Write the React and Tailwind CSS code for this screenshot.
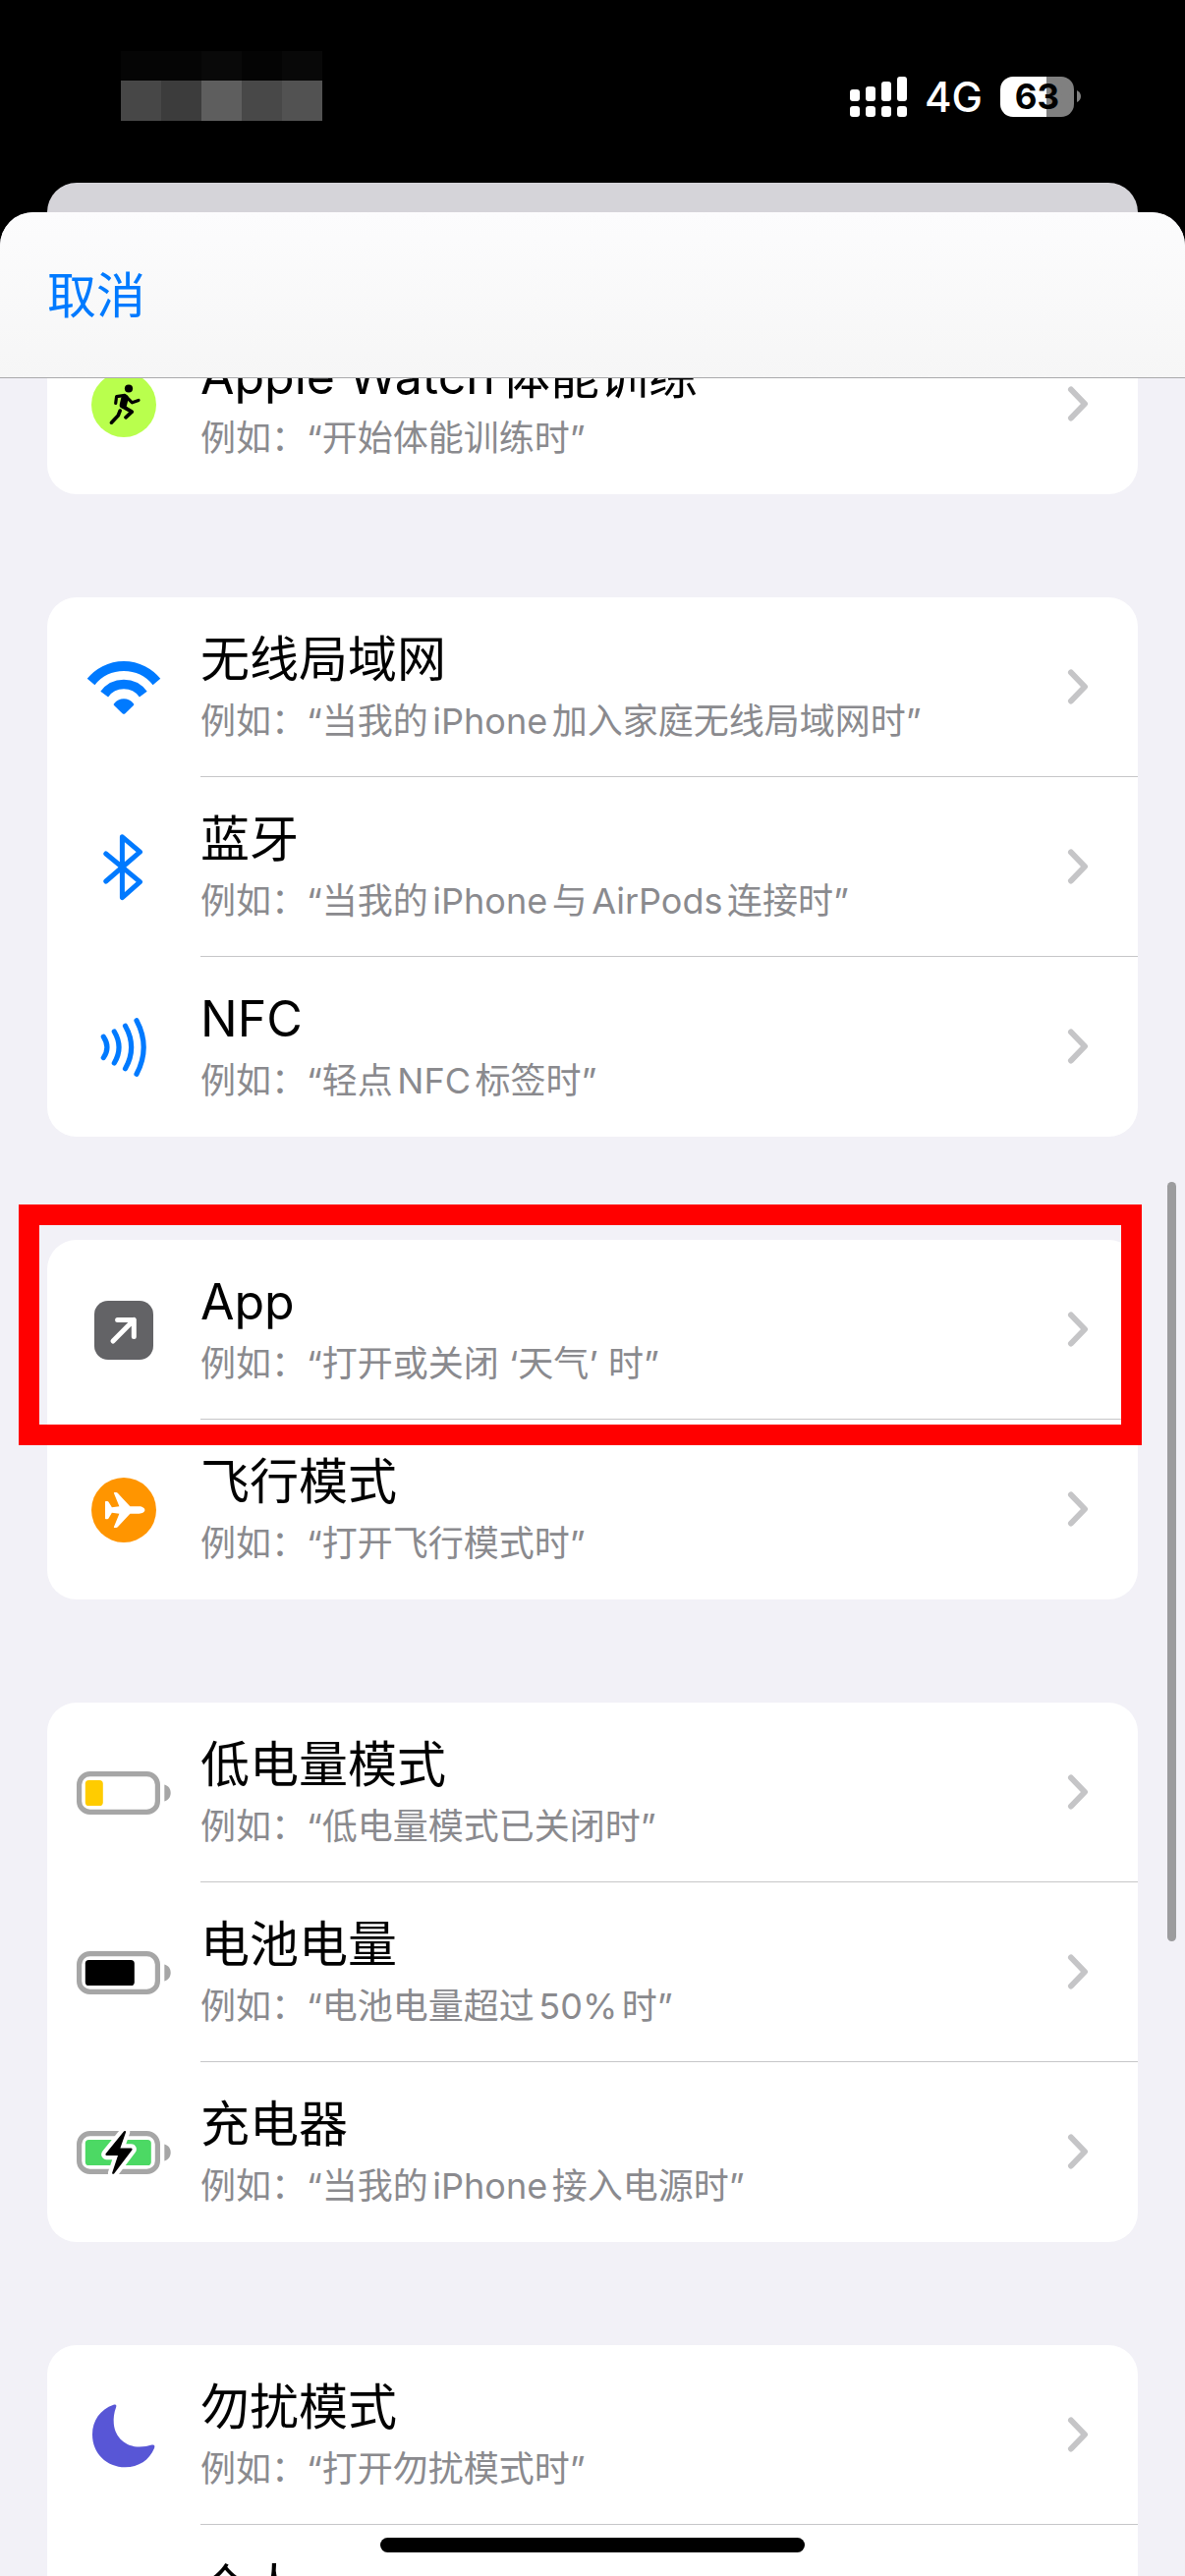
const blue = "#007aff";

function RunnerIcon() {
  return (
    <svg className="h-[66px] w-[66px]" viewBox="0 0 66 66" fill="none" aria-hidden="true">
      <circle cx="33" cy="33" r="33" fill="#b9ff4d" />
      <circle cx="38" cy="16.5" r="4.1" fill="#000" />
      <g stroke="#000" strokeLinecap="round" strokeLinejoin="round">
        <path d="M24.7 31.5L25.6 24.6L34 23.4L41.5 30.8L48 28.4" strokeWidth="3.2" />
        <path d="M34 26.3L32.4 33" strokeWidth="7.4" />
        <path d="M31.5 34.5L41.2 40.2L35 45.8" strokeWidth="3.8" />
        <path d="M29.2 39L27.2 44L20.4 51.2" strokeWidth="3.6" />
      </g>
    </svg>
  );
}

function WifiIcon() {
  return (
    <svg className="h-[54px] w-[76px]" viewBox="0 0 76 54" fill="none" aria-hidden="true">
      <path d="M4.6 21A43 43 0 0 1 71.4 21" stroke={blue} strokeWidth="10" />
      <path d="M18.2 33.6A24.5 24.5 0 0 1 57.8 33.6" stroke={blue} strokeWidth="9.6" />
      <path d="M28 43.2C33 36.6 43 36.6 48 43.2Q48.7 44.2 47.9 45L39.4 53.2Q38 54.4 36.6 53.2L28.1 45Q27.3 44.2 28 43.2Z" fill={blue} />
    </svg>
  );
}

function BluetoothIcon() {
  return (
    <svg className="h-[68px] w-[42px]" viewBox="0 0 42 68" fill="none" aria-hidden="true">
      <path
        d="M2.8 20L37.5 48.6L19.4 64.6V2.8L37.5 18.2L2.8 48"
        stroke={blue}
        strokeWidth="5"
        strokeLinecap="round"
        strokeLinejoin="round"
      />
    </svg>
  );
}

function NfcIcon() {
  return (
    <svg className="h-[60px] w-12" viewBox="0 0 48 60" fill="none" aria-hidden="true">
      <g stroke={blue} strokeWidth="5.2" strokeLinecap="round">
        <path d="M3.3 19.2Q10.6 30 3.3 40.6" />
        <path d="M14.3 14Q23.8 30 14.3 46" />
        <path d="M25.5 8.2Q37.8 30 25.5 51.8" />
        <path d="M37 2.7Q51.4 30 37 57.3" />
      </g>
    </svg>
  );
}

function AppIcon() {
  return (
    <svg className="h-[60px] w-[60px]" viewBox="0 0 60 60" fill="none" aria-hidden="true">
      <rect width="60" height="60" rx="14" fill="#636366" />
      <path
        d="M19 41L40.3 19.4M23.6 19.4H40.3V36.4"
        stroke="#fff"
        strokeWidth="5"
        strokeLinecap="round"
        strokeLinejoin="round"
      />
    </svg>
  );
}

function AirplaneIcon() {
  return (
    <svg className="h-[66px] w-[66px]" viewBox="0 0 66 66" aria-hidden="true">
      <circle cx="33" cy="33" r="33" fill="#ff9500" />
      <path
        d="M14 24.6Q14 23.9 14.8 23.9H16.2Q17 23.9 17.5 24.7L20.9 30.3L28.4 29.3L23 16Q22.6 15 23.6 15H25.2Q26.1 15 26.8 15.8L39.4 29.3H48.5C52 29.3 54.4 31.2 54.4 33S52 36.7 48.5 36.7H39.4L26.8 50.3Q26.1 51.1 25.2 51.1H23.6Q22.6 51.1 23 50.1L28.4 36.7L20.9 35.7L17.5 41.4Q17 42.2 16.2 42.2H14.8Q14 42.2 14 41.5Z"
        fill="#fff"
      />
    </svg>
  );
}

function BatteryIcon({ fill, level, charging }) {
  return (
    <svg className="h-[46px] w-24" viewBox="0 -1 96 46" fill="none" aria-hidden="true">
      <rect x="2.6" y="2.6" width="79.8" height="38.8" rx="11" stroke="#a6a6a6" strokeWidth="5.2" />
      <path d="M89.3 13.6C93.4 14.6 95.7 18 95.7 22S93.4 29.4 89.3 30.4Z" fill="#a6a6a6" />
      <rect x="8.8" y="9" width={level} height="26" rx="3.6" fill={fill} />
      {charging && (
        <path
          d="M48 .6C48.6-.4 50.4 0 50 1.4L44.4 17.4H55.4C56.6 17.4 57 18.6 56.3 19.5L38.3 43.2C37.5 44.3 35.7 43.8 36.2 42.4L42 25H30.6C29.4 25 29 24 29.7 23.1Z"
          fill="#000"
          stroke="#fff"
          strokeWidth="8.4"
          strokeLinejoin="round"
          paintOrder="stroke"
        />
      )}
    </svg>
  );
}

function MoonIcon() {
  return (
    <svg className="h-[66px] w-[66px]" viewBox="-1 -1 66 66" aria-hidden="true">
      <path
        d="M21.5.8C24-.2 24.8 1 24.2 3C22 9 21.3 14 21.8 20C23 34 34 43.6 48 43.6C53 43.6 56.5 42.8 60.5 41.6C63 40.9 64 42.2 63 45C58 57 47 64.3 33.5 64.3C14.5 64.3 0 50 0 31C0 17 8 5.5 21.5.8Z"
        fill="#5856d6"
      />
    </svg>
  );
}

function Chevron() {
  return (
    <svg className="h-9 w-[22px] shrink-0" viewBox="0 0 22 36" fill="none" aria-hidden="true">
      <path
        d="M4 3.5L18 18L4 32.5"
        stroke="#c5c5c7"
        strokeWidth="6"
        strokeLinecap="round"
        strokeLinejoin="round"
      />
    </svg>
  );
}

const groups = [
  [{ title: "Apple Watch体能训练", hint: "例如：“开始体能训练时”", icon: <RunnerIcon /> }],
  [
    { title: "无线局域网", hint: "例如：“当我的iPhone加入家庭无线局域网时”", icon: <WifiIcon /> },
    { title: "蓝牙", hint: "例如：“当我的iPhone与AirPods连接时”", icon: <BluetoothIcon /> },
    { title: "NFC", hint: "例如：“轻点NFC标签时”", icon: <NfcIcon /> },
  ],
  [
    { title: "App", hint: "例如：“打开或关闭 ‘天气’ 时”", icon: <AppIcon />, marked: true },
    { title: "飞行模式", hint: "例如：“打开飞行模式时”", icon: <AirplaneIcon /> },
  ],
  [
    { title: "低电量模式", hint: "例如：“低电量模式已关闭时”", icon: <BatteryIcon fill="#ffcc00" level={18} /> },
    { title: "电池电量", hint: "例如：“电池电量超过50%时”", icon: <BatteryIcon fill="#000000" level={50} /> },
    { title: "充电器", hint: "例如：“当我的iPhone接入电源时”", icon: <BatteryIcon fill="#4cd964" level={67} charging /> },
  ],
  [
    { title: "勿扰模式", hint: "例如：“打开勿扰模式时”", icon: <MoonIcon /> },
    { title: "个人" },
  ],
];

function Row({ title, hint, icon, marked }) {
  return (
    <li className="group relative">
      <button type="button" className="flex min-h-[183px] w-full text-left">
        <span className="flex w-[156px] shrink-0 items-center justify-center self-stretch">{icon}</span>
        <span className="flex flex-1 items-center self-stretch border-b border-[#c6c6c8] pr-12 group-last:border-transparent">
          <span className="flex flex-1 flex-col gap-3 self-start pt-[33px]">
            <span className="text-[50px] leading-[60px] text-black">{title}</span>
            {hint && <span className="text-[36px] leading-[42px] text-[#8a8a8e]">{hint}</span>}
          </span>
          <span className="pr-0.5">
            <Chevron />
          </span>
        </span>
      </button>
      {marked && (
        <span className="pointer-events-none absolute -top-9 -right-1 -bottom-[26px] -left-[29px] z-10 border-[21px] border-[#ff0000]" />
      )}
    </li>
  );
}

const mosaic = [
  ["bg-[#050505]", "bg-[#474747]"],
  ["bg-[#050505]", "bg-[#3c3c3c]"],
  ["bg-[#090909]", "bg-[#5e5e5e]"],
  ["bg-[#040404]", "bg-[#484848]"],
  ["bg-[#080808]", "bg-[#525252]"],
];

function StatusBar() {
  return (
    <div className="flex h-[186px] items-start justify-between pr-[106px] pl-[123px]">
      <div className="flex pt-[52px]">
        {mosaic.map(([top, bottom], i) => (
          <div key={i} className="w-[41px]">
            <div className={`h-[30px] ${top}`} />
            <div className={`h-[41px] ${bottom}`} />
          </div>
        ))}
      </div>
      <div className="flex items-center pt-[72px]">
        <svg className="h-[41px] w-[58px]" viewBox="0 0 58 41" fill="#fff" aria-hidden="true">
          <rect x="0" y="13" width="10" height="12" rx="3" />
          <rect x="16" y="10" width="10" height="15" rx="3" />
          <rect x="32" y="5" width="10" height="20" rx="3" />
          <rect x="48" y="0" width="10" height="25" rx="3" />
          <rect x="0" y="30" width="10" height="11" rx="3" />
          <rect x="16" y="30" width="10" height="11" rx="3" />
          <rect x="32" y="30" width="10" height="11" rx="3" />
          <rect x="48" y="30" width="10" height="11" rx="3" />
        </svg>
        <span className="ml-[18px] w-[77px] pt-0.5 text-[42px] leading-[50px] font-medium text-white">4G</span>
        <span className="flex h-[41px] w-[75px] items-center justify-center rounded-[13px] bg-linear-to-r from-white from-63% to-[#808080] to-63% text-[35px] leading-[41px] font-bold text-black">
          63
        </span>
        <svg className="ml-[3px] h-3 w-1" viewBox="0 0 4 12" aria-hidden="true">
          <path d="M0 0Q4 2 4 6T0 12Z" fill="#808080" />
        </svg>
      </div>
    </div>
  );
}

export default function App() {
  return (
    <div
      lang="zh-CN"
      className="relative flex h-screen flex-col overflow-hidden bg-black font-['Inter','Noto_Sans_CJK_SC',sans-serif] [text-autospace:normal]"
    >
      <StatusBar />
      <div className="mx-12 h-[70px] shrink-0 rounded-t-[30px] bg-[#d5d4d9]" />
      <div className="-mt-10 flex min-h-0 flex-1 flex-col overflow-hidden rounded-t-[34px] bg-[#f2f1f7]">
        <header className="z-20 flex h-[169px] shrink-0 items-center border-b border-[#a9a9ab] bg-linear-to-b from-[#fcfcfd] to-[#f6f6f6] px-12 pt-0.5">
          <button type="button" className="text-[50px] leading-[60px] text-[#007aff]">
            取消
          </button>
        </header>
        <main className="relative min-h-0 flex-1 overflow-hidden">
          <div className="-mt-[65px] flex flex-col gap-[105px] px-12">
            {groups.map((rows, i) => (
              <ul key={i} className="rounded-[30px] bg-white">
                {rows.map((row) => (
                  <Row key={row.title} {...row} />
                ))}
              </ul>
            ))}
          </div>
          <div className="absolute top-[818px] right-[9px] h-[773px] w-[9px] rounded-full bg-[#9c9c9e]" />
        </main>
      </div>
      <div className="absolute bottom-6 left-1/2 h-[15px] w-[432px] -translate-x-1/2 rounded-full bg-black" />
    </div>
  );
}
